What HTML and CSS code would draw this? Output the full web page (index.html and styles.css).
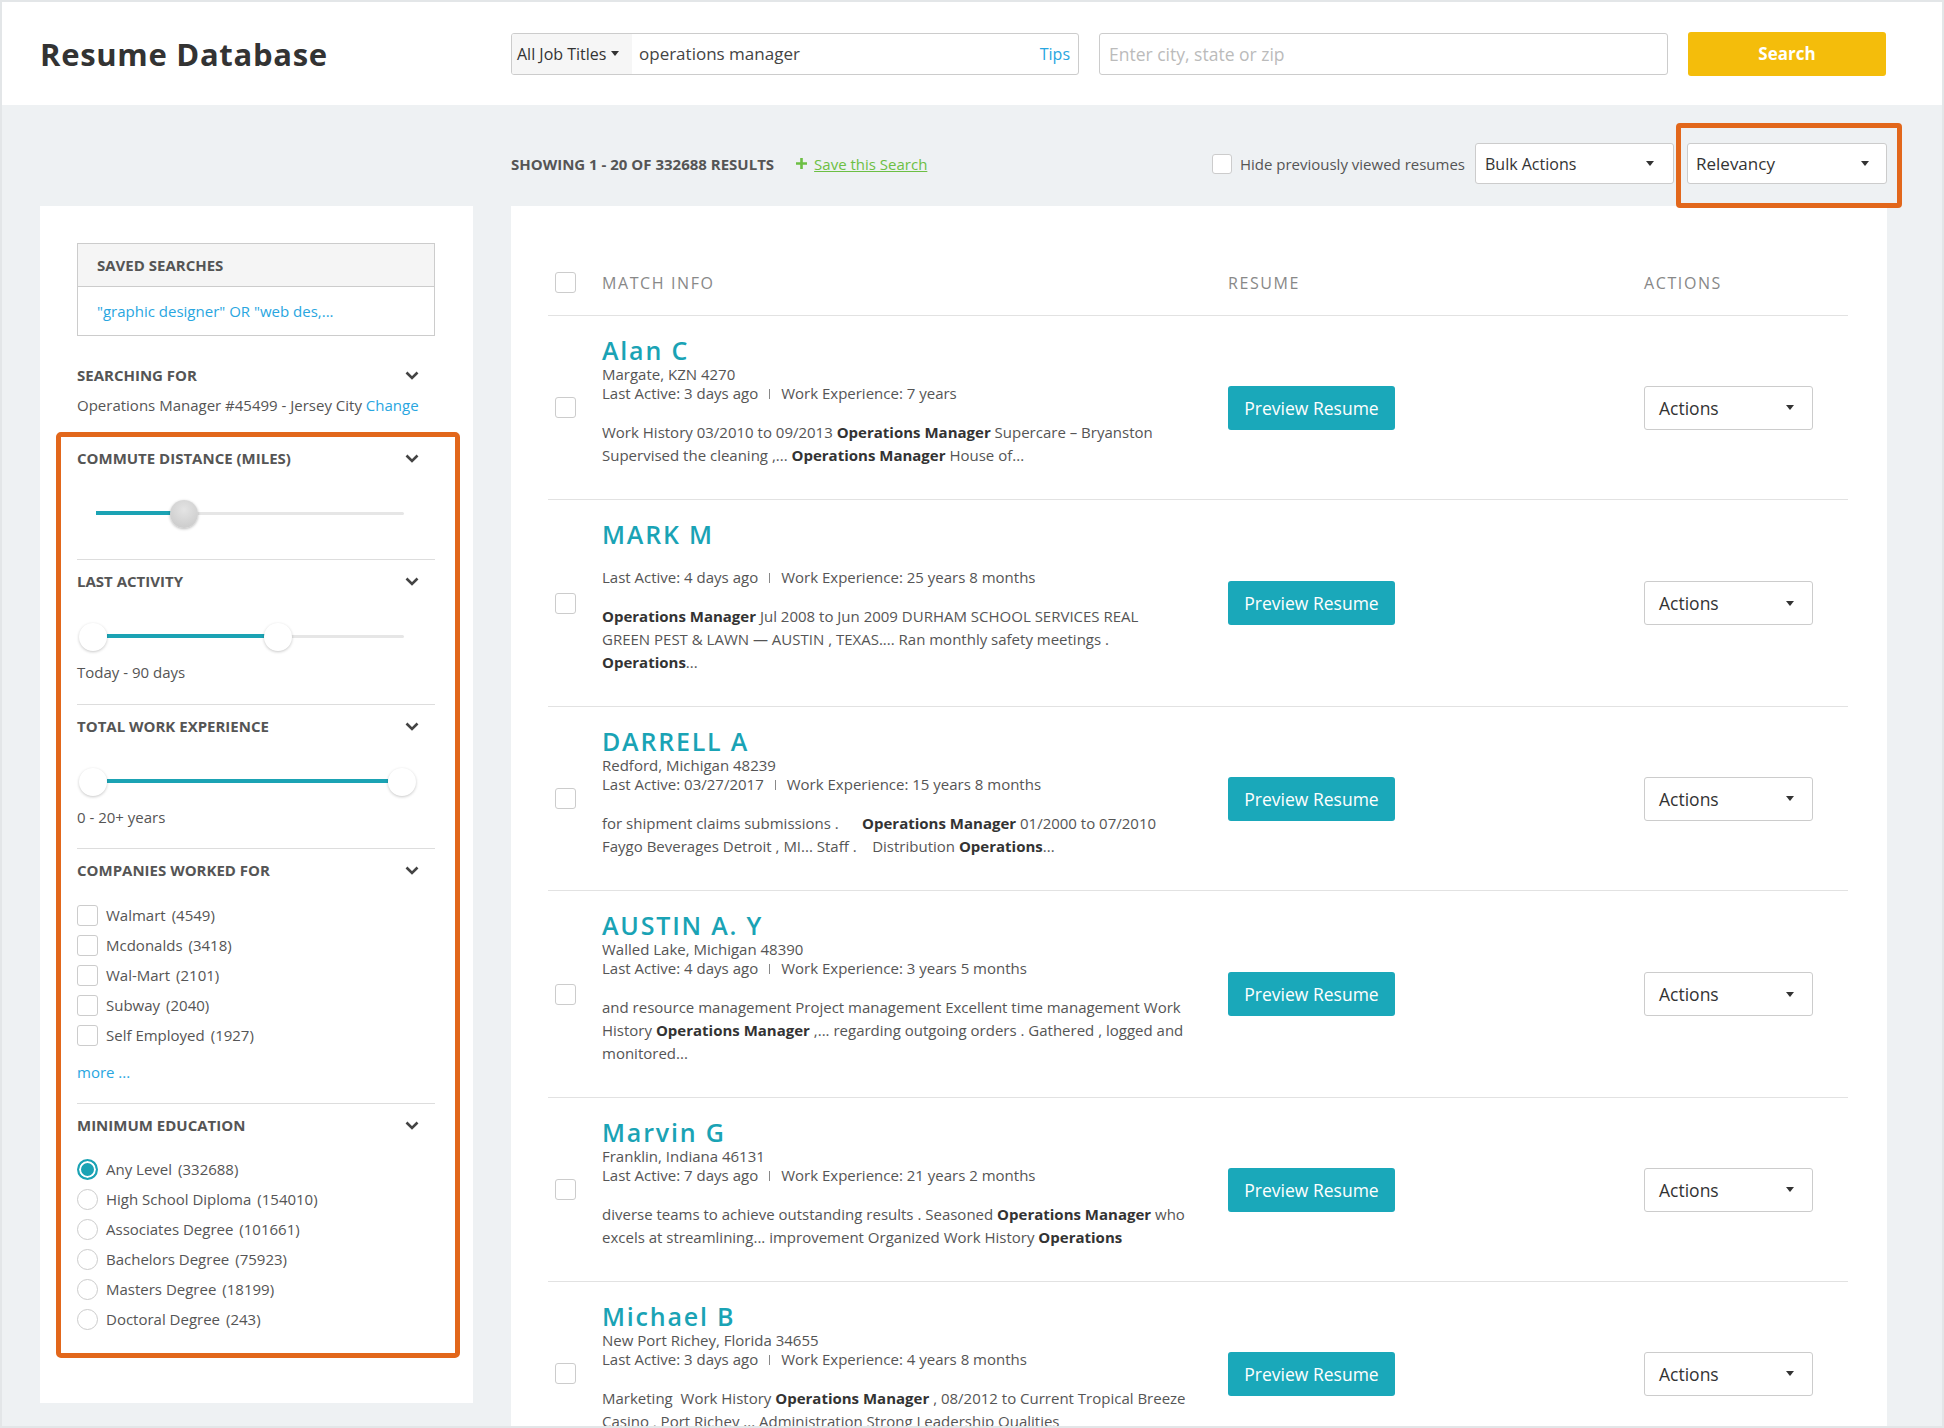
FILE: index.html
```html
<!DOCTYPE html>
<html lang="en">
<head>
<meta charset="utf-8">
<title>Resume Database</title>
<link rel="stylesheet" href="styles.css">
</head>
<body>
<div class="page">
  <header class="topbar">
    <h1 class="brand">Resume Database</h1>
    <div class="job-group">
      <div class="job-type">All Job Titles <span class="caret"></span></div>
      <div class="job-query">operations manager</div>
      <a class="tips">Tips</a>
    </div>
    <div class="loc-input">Enter city, state or zip</div>
    <button class="search-btn">Search</button>
  </header>

  <div class="content">
    <div class="toolbar">
      <div class="showing">SHOWING 1 - 20 OF 332688 RESULTS</div>
      <a class="save"><svg width="11" height="11" viewBox="0 0 11 11"><path d="M5.5 0v11M0 5.5h11" stroke="#6cbf43" stroke-width="2.6"/></svg><span>Save this Search</span></a>
      <label class="hide"><span class="cb"></span>Hide previously viewed resumes</label>
      <div class="select bulk">Bulk Actions <span class="caret"></span></div>
      <div class="sort-wrap"><div class="select sort">Relevancy <span class="caret"></span></div></div>
    </div>

    <aside class="sidebar">
      <div class="saved">
        <div class="saved-head">SAVED SEARCHES</div>
        <div class="saved-body">"graphic designer" OR "web des,...</div>
      </div>

      <div class="fhead searching"><span>Searching For</span><svg class="chev" width="14" height="9" viewBox="0 0 14 9"><path d="M1.5 1.5 7 7l5.5-5.5" fill="none" stroke="#444" stroke-width="2.6"/></svg></div>
      <div class="search-desc">Operations Manager #45499 - Jersey City <a class="blue">Change</a></div>

      <div class="filters">
        <section class="fsec first pb30">
          <div class="fhead"><span>Commute Distance (Miles)</span><svg class="chev" width="14" height="9" viewBox="0 0 14 9"><path d="M1.5 1.5 7 7l5.5-5.5" fill="none" stroke="#444" stroke-width="2.6"/></svg></div>
          <div class="slider">
            <div class="track"></div>
            <div class="fill" style="left:19px;width:88px"></div>
            <div class="thumb gray" style="left:93px"></div>
          </div>
        </section>

        <section class="fsec pb22">
          <div class="fhead"><span>Last Activity</span><svg class="chev" width="14" height="9" viewBox="0 0 14 9"><path d="M1.5 1.5 7 7l5.5-5.5" fill="none" stroke="#444" stroke-width="2.6"/></svg></div>
          <div class="slider">
            <div class="track"></div>
            <div class="fill" style="left:30px;width:158px"></div>
            <div class="thumb" style="left:2px"></div>
            <div class="thumb" style="left:187px"></div>
          </div>
          <div class="ftext">Today - 90 days</div>
        </section>

        <section class="fsec pb21">
          <div class="fhead"><span>Total Work Experience</span><svg class="chev" width="14" height="9" viewBox="0 0 14 9"><path d="M1.5 1.5 7 7l5.5-5.5" fill="none" stroke="#444" stroke-width="2.6"/></svg></div>
          <div class="slider">
            <div class="track"></div>
            <div class="fill" style="left:30px;width:281px"></div>
            <div class="thumb" style="left:2px"></div>
            <div class="thumb" style="left:311px"></div>
          </div>
          <div class="ftext">0 - 20+ years</div>
        </section>

        <section class="fsec pb21">
          <div class="fhead"><span>Companies Worked For</span><svg class="chev" width="14" height="9" viewBox="0 0 14 9"><path d="M1.5 1.5 7 7l5.5-5.5" fill="none" stroke="#444" stroke-width="2.6"/></svg></div>
          <div class="checks">
            <div class="check"><span class="cb"></span>Walmart<span class="count">(4549)</span></div>
            <div class="check"><span class="cb"></span>Mcdonalds<span class="count">(3418)</span></div>
            <div class="check"><span class="cb"></span>Wal-Mart<span class="count">(2101)</span></div>
            <div class="check"><span class="cb"></span>Subway<span class="count">(2040)</span></div>
            <div class="check"><span class="cb"></span>Self Employed<span class="count">(1927)</span></div>
          </div>
          <div class="more">more ...</div>
        </section>

        <section class="fsec">
          <div class="fhead"><span>Minimum Education</span><svg class="chev" width="14" height="9" viewBox="0 0 14 9"><path d="M1.5 1.5 7 7l5.5-5.5" fill="none" stroke="#444" stroke-width="2.6"/></svg></div>
          <div class="checks radios">
            <div class="check"><span class="radio on"></span>Any Level<span class="count">(332688)</span></div>
            <div class="check"><span class="radio"></span>High School Diploma<span class="count">(154010)</span></div>
            <div class="check"><span class="radio"></span>Associates Degree<span class="count">(101661)</span></div>
            <div class="check"><span class="radio"></span>Bachelors Degree<span class="count">(75923)</span></div>
            <div class="check"><span class="radio"></span>Masters Degree<span class="count">(18199)</span></div>
            <div class="check"><span class="radio"></span>Doctoral Degree<span class="count">(243)</span></div>
          </div>
        </section>
      </div>
    </aside>

    <main class="results">
      <div class="thead">
        <div class="cbcell"><span class="cb"></span></div>
        <div class="th">MATCH INFO</div>
        <div class="th">RESUME</div>
        <div class="th">ACTIONS</div>
      </div>

      <div class="row">
        <div class="cbcell"><span class="cb"></span></div>
        <div class="info">
          <div class="name">Alan C</div>
          <div class="loc">Margate, KZN 4270</div>
          <div class="meta">Last Active: 3 days ago<span class="sep"></span>Work Experience: 7 years</div>
          <div class="snip">Work History 03/2010 to 09/2013 <b>Operations Manager</b> Supercare – Bryanston<br>Supervised the cleaning ,... <b>Operations Manager</b> House of...</div>
        </div>
        <div><span class="preview">Preview Resume</span></div>
        <div><span class="actions">Actions <span class="caret"></span></span></div>
      </div>

      <div class="row">
        <div class="cbcell"><span class="cb"></span></div>
        <div class="info">
          <div class="name">MARK M</div>
          <div class="loc"></div>
          <div class="meta">Last Active: 4 days ago<span class="sep"></span>Work Experience: 25 years 8 months</div>
          <div class="snip"><b>Operations Manager</b> Jul 2008 to Jun 2009 DURHAM SCHOOL SERVICES REAL<br>GREEN PEST &amp; LAWN — AUSTIN , TEXAS.... Ran monthly safety meetings .<br><b>Operations</b>...</div>
        </div>
        <div><span class="preview">Preview Resume</span></div>
        <div><span class="actions">Actions <span class="caret"></span></span></div>
      </div>

      <div class="row">
        <div class="cbcell"><span class="cb"></span></div>
        <div class="info">
          <div class="name">DARRELL A</div>
          <div class="loc">Redford, Michigan 48239</div>
          <div class="meta">Last Active: 03/27/2017<span class="sep"></span>Work Experience: 15 years 8 months</div>
          <div class="snip">for shipment claims submissions .&nbsp;&nbsp;&nbsp;&nbsp;&nbsp; <b>Operations Manager</b> 01/2000 to 07/2010<br>Faygo Beverages Detroit , MI... Staff .&nbsp;&nbsp;&nbsp; Distribution <b>Operations</b>...</div>
        </div>
        <div><span class="preview">Preview Resume</span></div>
        <div><span class="actions">Actions <span class="caret"></span></span></div>
      </div>

      <div class="row">
        <div class="cbcell"><span class="cb"></span></div>
        <div class="info">
          <div class="name">AUSTIN A. Y</div>
          <div class="loc">Walled Lake, Michigan 48390</div>
          <div class="meta">Last Active: 4 days ago<span class="sep"></span>Work Experience: 3 years 5 months</div>
          <div class="snip">and resource management Project management Excellent time management Work<br>History <b>Operations Manager</b> ,... regarding outgoing orders . Gathered , logged and<br>monitored...</div>
        </div>
        <div><span class="preview">Preview Resume</span></div>
        <div><span class="actions">Actions <span class="caret"></span></span></div>
      </div>

      <div class="row">
        <div class="cbcell"><span class="cb"></span></div>
        <div class="info">
          <div class="name">Marvin G</div>
          <div class="loc">Franklin, Indiana 46131</div>
          <div class="meta">Last Active: 7 days ago<span class="sep"></span>Work Experience: 21 years 2 months</div>
          <div class="snip">diverse teams to achieve outstanding results . Seasoned <b>Operations Manager</b> who<br>excels at streamlining... improvement Organized Work History <b>Operations</b></div>
        </div>
        <div><span class="preview">Preview Resume</span></div>
        <div><span class="actions">Actions <span class="caret"></span></span></div>
      </div>

      <div class="row">
        <div class="cbcell"><span class="cb"></span></div>
        <div class="info">
          <div class="name">Michael B</div>
          <div class="loc">New Port Richey, Florida 34655</div>
          <div class="meta">Last Active: 3 days ago<span class="sep"></span>Work Experience: 4 years 8 months</div>
          <div class="snip">Marketing&nbsp; Work History <b>Operations Manager</b> , 08/2012 to Current Tropical Breeze<br>Casino , Port Richey ... Administration Strong Leadership Qualities</div>
        </div>
        <div><span class="preview">Preview Resume</span></div>
        <div><span class="actions">Actions <span class="caret"></span></span></div>
      </div>
    </main>
  </div>
</div>
</body>
</html>
```

FILE: styles.css
```css
html, body {
  margin: 0;
  padding: 0;
}

.page {
  width: 1944px;
  height: 1428px;
  box-sizing: border-box;
  border: 2px solid #e3e6e8;
  overflow: hidden;
  background: #eef1f3;
  font-family: "Open Sans", "Liberation Sans", sans-serif;
  color: #555;
}

/* ---------- header ---------- */
.topbar {
  height: 103px;
  background: #fff;
  display: flex;
  align-items: center;
  padding-left: 38px;
}

.brand {
  flex: 0 0 471px;
  margin: 0;
  font-size: 31px;
  font-weight: 700;
  color: #333;
  letter-spacing: 0.7px;
}

.job-group {
  width: 568px;
  height: 42px;
  box-sizing: border-box;
  border: 1px solid #ccc;
  border-radius: 3px;
  display: flex;
  align-items: center;
  overflow: hidden;
}

.job-type {
  width: 120px;
  height: 100%;
  box-sizing: border-box;
  background: #f6f6f6;
  display: flex;
  align-items: center;
  gap: 5px;
  padding-left: 5px;
  font-size: 16px;
  color: #333;
}

.job-query {
  flex: 1;
  padding-left: 7px;
  font-size: 17px;
  color: #444;
}

.tips {
  color: #29a6df;
  font-size: 16px;
  padding-right: 8px;
}

.caret {
  display: inline-block;
  width: 0;
  height: 0;
  border-left: 4px solid transparent;
  border-right: 4px solid transparent;
  border-top: 5px solid #333;
}

.loc-input {
  width: 569px;
  height: 42px;
  margin-left: 20px;
  box-sizing: border-box;
  border: 1px solid #ccc;
  border-radius: 3px;
  padding-left: 9px;
  display: flex;
  align-items: center;
  font-size: 17.5px;
  color: #bbb;
}

.search-btn {
  width: 198px;
  height: 44px;
  margin-left: 20px;
  border: 0;
  border-radius: 3px;
  background: #f4bd0b;
  color: #fff;
  font-family: "Open Sans", sans-serif;
  font-weight: 700;
  font-size: 17px;
}

/* ---------- content grid ---------- */
.content {
  display: grid;
  grid-template-columns: 433px 1376px;
  column-gap: 38px;
  padding-left: 38px;
}

.toolbar {
  grid-column: 2;
  grid-row: 1;
  height: 41px;
  padding: 38px 0 22px;
  display: flex;
  align-items: center;
}

.showing {
  font-size: 15px;
  font-weight: 700;
  color: #555;
}

.save {
  margin-left: 22px;
  display: flex;
  align-items: center;
  gap: 7px;
  font-size: 15px;
  color: #6cbf43;
}

.save span {
  text-decoration: underline;
}

.hide {
  margin-left: auto;
  display: flex;
  align-items: center;
  gap: 8px;
  font-size: 15px;
  color: #555;
}

.cb {
  display: inline-block;
  flex: 0 0 auto;
  width: 21px;
  height: 21px;
  box-sizing: border-box;
  border: 1px solid #ccc;
  border-radius: 3px;
  background: #fff;
}

.hide .cb {
  width: 20px;
  height: 20px;
}

.select {
  height: 41px;
  box-sizing: border-box;
  border: 1px solid #ccc;
  border-radius: 3px;
  background: #fff;
  display: flex;
  align-items: center;
  justify-content: space-between;
  font-size: 16px;
  color: #333;
}

.bulk {
  width: 199px;
  margin-left: 10px;
  padding: 0 19px 0 9px;
}

.sort-wrap {
  position: relative;
  margin-left: 13px;
}

.sort {
  width: 200px;
  padding: 0 17px 0 8px;
  font-size: 17px;
}

.sort-wrap::after {
  content: "";
  position: absolute;
  left: -11px;
  right: -15px;
  top: -20px;
  bottom: -24px;
  border: 5px solid #e2671b;
  border-radius: 4px;
  pointer-events: none;
}

/* ---------- sidebar ---------- */
.sidebar {
  grid-column: 1;
  grid-row: 2;
  align-self: start;
  background: #fff;
  padding: 37px 38px 45px 37px;
}

.saved {
  border: 1px solid #ccc;
}

.saved-head {
  height: 42px;
  background: #f5f5f5;
  border-bottom: 1px solid #ccc;
  padding-left: 19px;
  display: flex;
  align-items: center;
  font-size: 15px;
  font-weight: 700;
  color: #555;
}

.saved-body {
  height: 48px;
  padding-left: 19px;
  display: flex;
  align-items: center;
  font-size: 15px;
  color: #29a6df;
}

.fhead {
  height: 20px;
  display: flex;
  align-items: center;
  justify-content: space-between;
  padding-right: 16px;
  font-size: 15px;
  font-weight: 700;
  color: #555;
  text-transform: uppercase;
}

.searching {
  margin-top: 29px;
}

.search-desc {
  margin-top: 10px;
  font-size: 15px;
  line-height: 20px;
  color: #555;
}

.blue {
  color: #29a6df;
}

.filters {
  margin: 17px -25px 0 -21px;
  border: 5px solid #e2671b;
  border-radius: 5px;
  padding: 0 20px 19px 16px;
}

.fsec {
  border-top: 1px solid #ddd;
  padding-top: 11px;
}

.fsec.first {
  border-top: 0;
  padding-top: 11px;
}

.pb30 { padding-bottom: 31px; }
.pb22 { padding-bottom: 22px; }
.pb21 { padding-bottom: 21px; }

.slider {
  position: relative;
  height: 28px;
  margin-top: 32px;
}

.track {
  position: absolute;
  left: 19px;
  right: 31px;
  top: 12px;
  height: 3px;
  border-radius: 2px;
  background: #e6e6e6;
}

.fill {
  position: absolute;
  top: 11px;
  height: 4px;
  background: #1ba3b4;
}

.thumb {
  position: absolute;
  top: 0;
  width: 28px;
  height: 28px;
  border-radius: 50%;
  background: #fff;
  box-shadow: 0 1px 3px rgba(0, 0, 0, 0.22);
}

.thumb.gray {
  background: radial-gradient(circle at 50% 35%, #e4e4e4, #c6c6c6);
  box-shadow: 0 1px 3px rgba(0, 0, 0, 0.28);
}

.ftext {
  margin-top: 11px;
  font-size: 15px;
  line-height: 20px;
  color: #555;
}

.checks {
  margin-top: 20px;
}

.checks.radios {
  margin-top: 19px;
}

.check {
  height: 30px;
  display: flex;
  align-items: center;
  gap: 8px;
  font-size: 15px;
  color: #555;
}

.count {
  margin-left: -2px;
}

.more {
  margin-top: 12px;
  font-size: 15px;
  line-height: 20px;
  color: #29a6df;
}

.radio {
  flex: 0 0 auto;
  width: 21px;
  height: 21px;
  box-sizing: border-box;
  border: 1px solid #ccc;
  border-radius: 50%;
  background: #fff;
}

.radio.on {
  border: 2px solid #1ba3b4;
  background: #1ba3b4;
  box-shadow: inset 0 0 0 2px #fff;
}

/* ---------- results ---------- */
.results {
  grid-column: 2;
  grid-row: 2;
  background: #fff;
  padding: 44px 39px 0 37px;
}

.thead,
.row {
  display: grid;
  grid-template-columns: 54px 626px 416px 1fr;
  align-items: center;
  border-bottom: 1px solid #e2e2e2;
}

.thead {
  height: 65px;
}

.th {
  font-size: 16px;
  color: #888;
  letter-spacing: 1.6px;
}

.cbcell {
  padding-left: 7px;
  display: flex;
}

.info {
  padding: 19px 0 32px;
}

.name {
  font-size: 25px;
  font-weight: 600;
  line-height: 30px;
  color: #1aa3b5;
  letter-spacing: 1.8px;
}

.loc,
.meta {
  min-height: 19px;
  font-size: 15px;
  line-height: 19px;
  color: #555;
}

.sep {
  display: inline-block;
  width: 1px;
  height: 10px;
  margin: 0 11px;
  background: #888;
}

.snip {
  margin-top: 18px;
  font-size: 15px;
  line-height: 23px;
  color: #555;
  white-space: nowrap;
}

.snip b {
  color: #333;
  font-weight: 700;
}

.preview {
  width: 167px;
  height: 44px;
  border-radius: 3px;
  background: #1aa8ba;
  color: #fff;
  font-size: 17.5px;
  display: flex;
  align-items: center;
  justify-content: center;
}

.actions {
  width: 169px;
  height: 44px;
  box-sizing: border-box;
  border: 1px solid #ccc;
  border-radius: 3px;
  padding: 0 18px 0 14px;
  display: flex;
  align-items: center;
  justify-content: space-between;
  font-size: 17.5px;
  color: #333;
}
```
